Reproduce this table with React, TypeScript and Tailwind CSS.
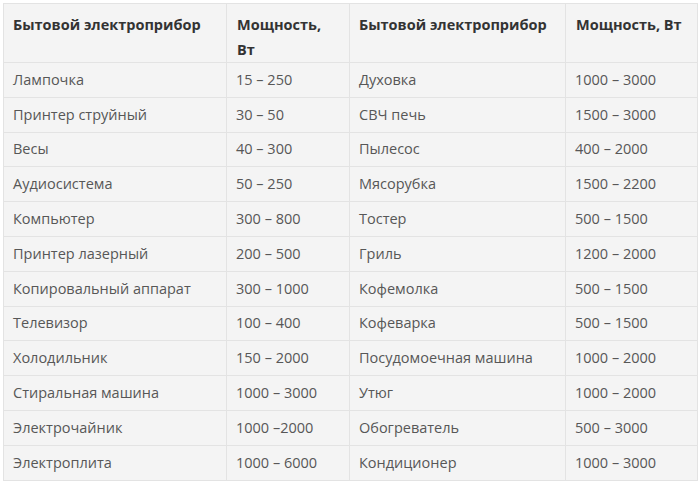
const rows: [string, string, string, string][] = [
  ["Лампочка", "15 – 250", "Духовка", "1000 – 3000"],
  ["Принтер струйный", "30 – 50", "СВЧ печь", "1500 – 3000"],
  ["Весы", "40 – 300", "Пылесос", "400 – 2000"],
  ["Аудиосистема", "50 – 250", "Мясорубка", "1500 – 2200"],
  ["Компьютер", "300 – 800", "Тостер", "500 – 1500"],
  ["Принтер лазерный", "200 – 500", "Гриль", "1200 – 2000"],
  ["Копировальный аппарат", "300 – 1000", "Кофемолка", "500 – 1500"],
  ["Телевизор", "100 – 400", "Кофеварка", "500 – 1500"],
  ["Холодильник", "150 – 2000", "Посудомоечная машина", "1000 – 2000"],
  ["Стиральная машина", "1000 – 3000", "Утюг", "1000 – 2000"],
  ["Электрочайник", "1000 –2000", "Обогреватель", "500 – 3000"],
  ["Электроплита", "1000 – 6000", "Кондиционер", "1000 – 3000"],
]

export default function App() {
  return (
    <div className="h-[483px] w-[700px] bg-white pl-[3px] pt-[3px] font-['Open_Sans',sans-serif]">
      <table className="w-[694px] table-fixed border-collapse bg-[#f4f4f4] text-[14.5px]">
        <colgroup>
          <col className="w-[223px]" />
          <col className="w-[123px]" />
          <col className="w-[216px]" />
          <col className="w-[132px]" />
        </colgroup>
        <thead>
          <tr className="h-[59px] text-left align-top font-bold text-[#333]">
            <th className="border border-[#e3e3e3] px-[9px] pt-[8px] leading-[25px]">Бытовой электроприбор</th>
            <th className="border border-[#e3e3e3] px-[10px] pt-[8px] leading-[25px]">
              Мощность,
              <br />
              Вт
            </th>
            <th className="border border-[#e3e3e3] px-[9px] pt-[8px] leading-[25px]">Бытовой электроприбор</th>
            <th className="whitespace-nowrap border border-[#e3e3e3] pl-[10px] pr-0 pt-[8px] leading-[25px]">Мощность, Вт</th>
          </tr>
        </thead>
        <tbody className="text-[#575757]">
          {rows.map((r) => (
            <tr key={r[0]} className="h-[34.8px]">
              {r.map((cell, i) => (
                <td key={i} className="whitespace-nowrap border border-[#e3e3e3] px-[9px] leading-[20px]">
                  {cell}
                </td>
              ))}
            </tr>
          ))}
        </tbody>
      </table>
    </div>
  )
}
